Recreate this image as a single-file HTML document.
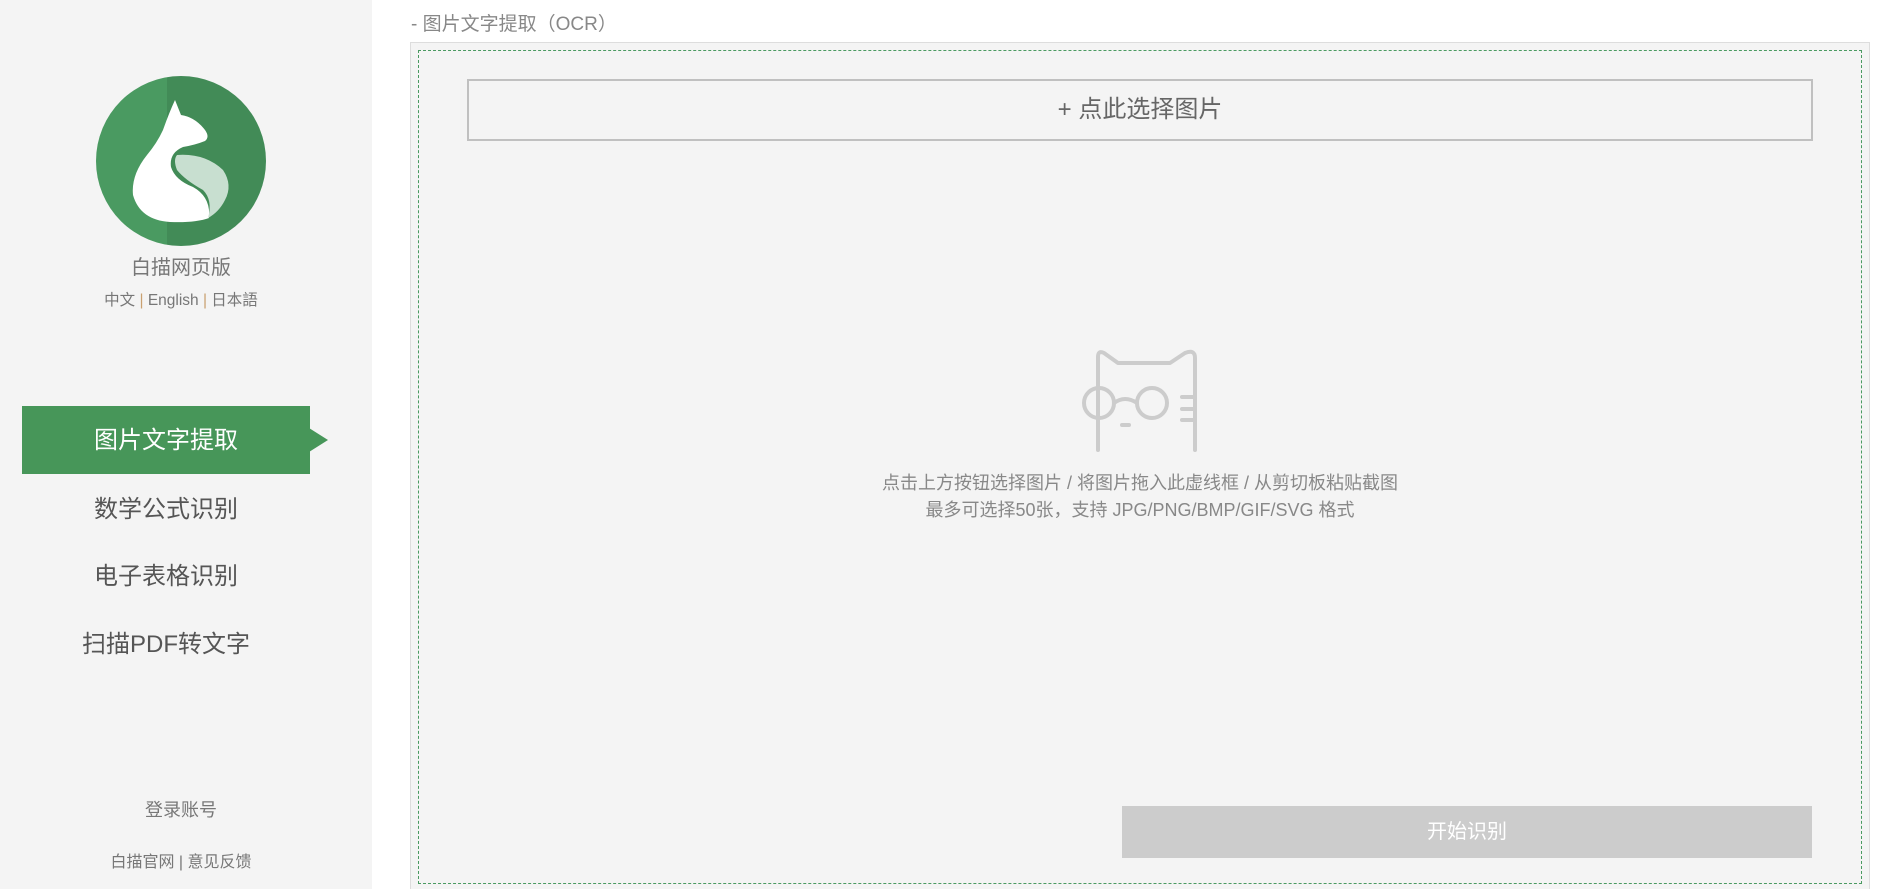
<!DOCTYPE html>
<html><head><meta charset="utf-8"><style>
*{margin:0;padding:0;box-sizing:border-box}
html,body{width:1877px;height:889px;overflow:hidden}
body{background:#fff;font-family:"Liberation Sans","Noto Sans CJK SC",sans-serif;position:relative}
.side{position:absolute;left:0;top:0;width:372px;height:889px;background:#f4f4f4}
.abs{position:absolute}
.c{text-align:center}
</style></head><body>
<div class="side">
<svg class="abs" style="left:95px;top:75px" width="172" height="172" viewBox="0 0 172 172">
<defs><clipPath id="cc"><circle cx="86" cy="86" r="85"/></clipPath></defs>
<g clip-path="url(#cc)"><rect x="0" y="0" width="72" height="172" fill="#4a9a61"/><rect x="72" y="0" width="100" height="172" fill="#428b57"/></g>
<path d="M80 25 L86 40 Q100 42 110 55 Q115 62 110 66 Q100 70 88 72 Q74 78 76 92 Q80 105 98 112 Q116 122 114 143 Q100 148 75 147 Q45 145 38 120 Q36 100 52 80 Q62 68 68 55 Q74 38 80 25Z" fill="#fff"/>
<path d="M82 80 Q110 78 128 95 Q138 110 130 125 Q124 137 113 143 Q118 125 108 115 Q90 105 82 95 Q78 85 82 80Z" fill="#c8dfd0"/>
</svg>
<div class="abs c" style="left:0;width:362px;top:251px;font-size:20px;color:#777">白描网页版</div>
<div class="abs c" style="left:0;width:362px;top:288px;font-size:15.5px;color:#777">中文 <span style="color:#c9a070">|</span> English <span style="color:#c9a070">|</span> 日本語</div>
<div class="abs" style="left:22px;top:406px;width:288px;height:68px;background:#479659"></div>
<div class="abs" style="left:309px;top:428px;width:0;height:0;border-top:12px solid transparent;border-bottom:12px solid transparent;border-left:19px solid #479659"></div>
<div class="abs c" style="left:22px;width:288px;top:420px;font-size:24px;color:#fff">图片文字提取</div>
<div class="abs c" style="left:22px;width:288px;top:489px;font-size:24px;color:#555">数学公式识别</div>
<div class="abs c" style="left:22px;width:288px;top:556px;font-size:24px;color:#555">电子表格识别</div>
<div class="abs c" style="left:22px;width:288px;top:624px;font-size:24px;color:#555">扫描PDF转文字</div>
<div class="abs c" style="left:0;width:362px;top:796px;font-size:18px;color:#777">登录账号</div>
<div class="abs c" style="left:0;width:362px;top:848px;font-size:16px;color:#777">白描官网 | 意见反馈</div>
</div>
<div class="abs" style="left:411px;top:9px;font-size:19px;color:#888">- 图片文字提取（OCR）</div>
<div class="abs" style="left:410px;top:42px;width:1460px;height:860px;border:1px solid #ddd;background:#f4f4f4"></div>
<div class="abs" style="left:418px;top:50px;width:1444px;height:834px;border:1px dashed #4a9a61"></div>
<div class="abs c" style="left:467px;top:79px;width:1346px;height:62px;border:2px solid #c0c0c0;font-size:24px;line-height:58px;color:#666">+ 点此选择图片</div>
<svg class="abs" style="left:1080px;top:345px" width="120" height="110" viewBox="1080 345 120 110" fill="none" stroke="#ccc" stroke-width="4" stroke-linecap="round" stroke-linejoin="round">
<path d="M1098 450 V357 Q1098 350 1104 353 L1118 363 H1170 L1185 353 Q1195 349 1195 358 V450"/>
<circle cx="1099" cy="403" r="15"/><circle cx="1152" cy="403" r="15"/>
<path d="M1114 403 Q1125 395 1137 403"/>
<path d="M1122 425 H1129"/>
<path d="M1182 397 H1193 M1182 409 H1193 M1182 420 H1193"/>
</svg>
<div class="abs c" style="left:418px;width:1444px;top:470px;font-size:18px;color:#888;line-height:27px">点击上方按钮选择图片 / 将图片拖入此虚线框 / 从剪切板粘贴截图<br>最多可选择50张，支持 JPG/PNG/BMP/GIF/SVG 格式</div>
<div class="abs c" style="left:1122px;top:806px;width:690px;height:52px;background:#ccc;color:#fff;font-size:20px;line-height:52px">开始识别</div>
</body></html>
